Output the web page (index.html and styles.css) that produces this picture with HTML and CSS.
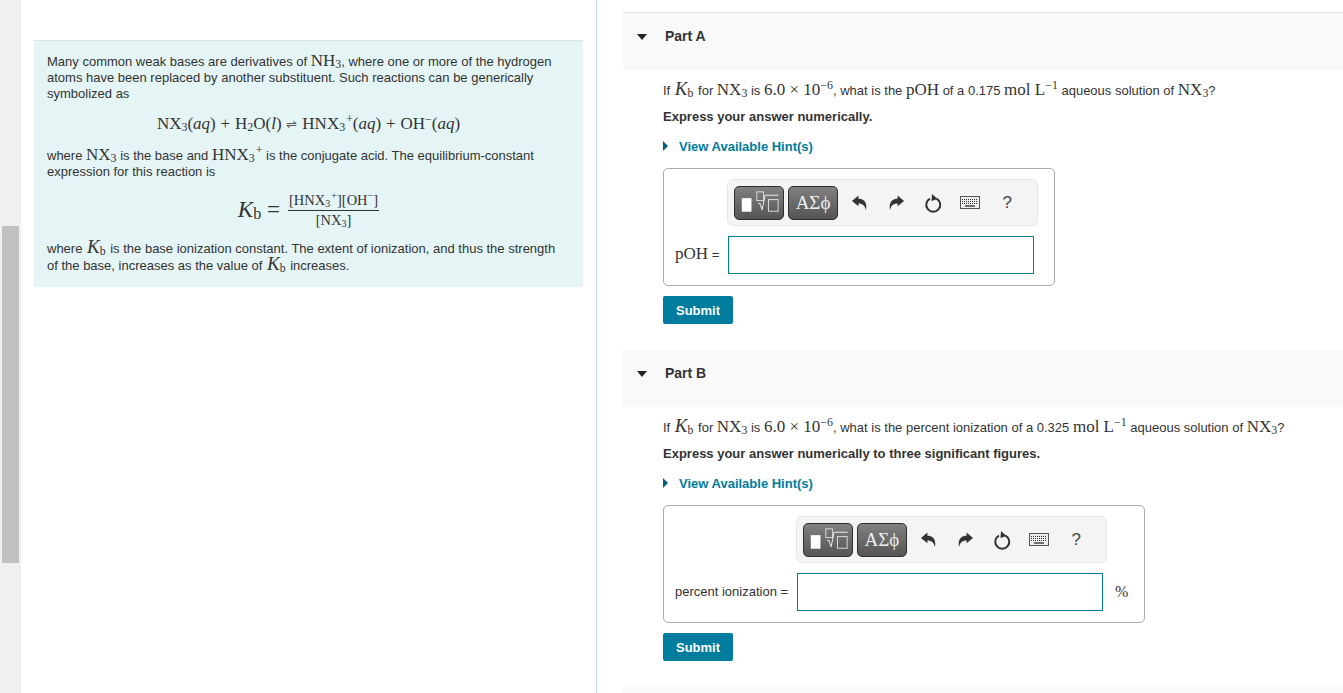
FILE: index.html
```html
<!DOCTYPE html>
<html lang="en">
<head>
    <meta charset="UTF-8">
    <title>Part A and Part B</title>
    <link rel="stylesheet" href="styles.css">
</head>
<body>

    <!-- scrollbar gutter -->
    <div class="gutter"><div class="thumb"></div></div>

    <!-- intro column -->
    <div class="left-pane">
        <div class="intro">
            <p>Many common weak bases are derivatives of <span class="m">NH<sub>3</sub></span>, where one or more of the hydrogen atoms have been replaced by another substituent. Such reactions can be generically symbolized as</p>
            <div class="equation"><span class="m">NX<sub>3</sub>(<i>aq</i>) + H<sub>2</sub>O(<i>l</i>) <span class="arrow">⇌</span> HNX<sub>3</sub><sup>+</sup>(<i>aq</i>) + OH<sup>−</sup>(<i>aq</i>)</span></div>
            <p>where <span class="m">NX<sub>3</sub></span> is the base and <span class="m">HNX<sub>3</sub><sup>+</sup></span> is the conjugate acid. The equilibrium-constant expression for this reaction is</p>
            <div class="equation kb-row">
                <span class="m kb-big"><i>K</i><sub>b</sub> =</span>
                <span class="fraction">
                    <span class="num">[HNX<sub>3</sub><sup>+</sup>][OH<sup>−</sup>]</span>
                    <span class="den">[NX<sub>3</sub>]</span>
                </span>
            </div>
            <p class="intro-last">where <span class="m kb"><i>K</i><sub>b</sub></span> is the base ionization constant. The extent of ionization, and thus the strength of the base, increases as the value of <span class="m kb"><i>K</i><sub>b</sub></span> increases.</p>
        </div>
    </div>

    <!-- questions column -->
    <div class="right-pane">

        <!-- Part A -->
        <div class="part part-first">
            <div class="part-header"><span class="caret-down"></span><span class="part-title">Part A</span></div>
            <div class="part-body">
                <p class="question">If <span class="m kb"><i>K</i><sub>b</sub></span> for <span class="m">NX<sub>3</sub></span> is <span class="m">6.0 × 10<sup>−6</sup></span>, what is the <span class="m">pOH</span> of a 0.175 <span class="m">mol L<sup>−1</sup></span> aqueous solution of <span class="m">NX<sub>3</sub></span>?</p>
                <p class="instruction">Express your answer numerically.</p>
                <div class="hint"><span class="caret-right"></span>View Available Hint(s)</div>
                <div class="answer-box answer-a">
                    <div class="toolbar">
                        <button class="tool-btn">
                            <svg width="49" height="34" viewBox="0 0 49 34"><rect x="7" y="12" width="10" height="14" fill="#fff"/><rect x="22.5" y="5.5" width="7" height="9" fill="none" stroke="#ddd"/><path d="M24 18l1.5 -1 2.5 7 3 -15h14" fill="none" stroke="#eee"/><rect x="34.5" y="13.5" width="10" height="12" fill="none" stroke="#ddd"/></svg>
                        </button>
                        <button class="tool-btn tool-text">ΑΣϕ</button>
                        <span class="tool-icon"><svg width="15" height="15" viewBox="0 0 14 14"><path d="M0 5.5L6 .5V3.5C11 3.5 14.5 7 13 14C12 10 10 8 6 8V10.5Z" fill="#333"/></svg></span>
                        <span class="tool-icon"><svg width="15" height="15" viewBox="0 0 14 14"><path d="M14 5.5L8 .5V3.5C3 3.5 -.5 7 1 14C2 10 4 8 8 8V10.5Z" fill="#333"/></svg></span>
                        <span class="tool-icon"><svg width="18" height="20" viewBox="0 0 18 20"><path d="M12.5 5.6A7 7 0 1 1 6 5.6" fill="none" stroke="#333" stroke-width="2"/><path d="M8 1L13.5 6 7.5 8Z" fill="#333"/></svg></span>
                        <span class="tool-icon"><svg width="20" height="13" viewBox="0 0 20 13"><rect x=".5" y=".5" width="19" height="12" fill="#eee" stroke="#555"/><path d="M2 3.5h16M2 5.5h16M2 7.5h16" stroke="#333" stroke-dasharray="1 1"/><path d="M5 10h10" stroke="#444" stroke-width="1.5"/></svg></span>
                        <span class="tool-icon tool-help">?</span>
                    </div>
                    <span class="answer-label"><span class="m">pOH</span> =</span>
                    <div class="answer-input"></div>
                </div>
                <button class="submit">Submit</button>
            </div>
        </div>

        <!-- Part B -->
        <div class="part">
            <div class="part-header"><span class="caret-down"></span><span class="part-title">Part B</span></div>
            <div class="part-body">
                <p class="question">If <span class="m kb"><i>K</i><sub>b</sub></span> for <span class="m">NX<sub>3</sub></span> is <span class="m">6.0 × 10<sup>−6</sup></span>, what is the percent ionization of a 0.325 <span class="m">mol L<sup>−1</sup></span> aqueous solution of <span class="m">NX<sub>3</sub></span>?</p>
                <p class="instruction">Express your answer numerically to three significant figures.</p>
                <div class="hint"><span class="caret-right"></span>View Available Hint(s)</div>
                <div class="answer-box answer-b">
                    <div class="toolbar">
                        <button class="tool-btn">
                            <svg width="49" height="34" viewBox="0 0 49 34"><rect x="7" y="12" width="10" height="14" fill="#fff"/><rect x="22.5" y="5.5" width="7" height="9" fill="none" stroke="#ddd"/><path d="M24 18l1.5 -1 2.5 7 3 -15h14" fill="none" stroke="#eee"/><rect x="34.5" y="13.5" width="10" height="12" fill="none" stroke="#ddd"/></svg>
                        </button>
                        <button class="tool-btn tool-text">ΑΣϕ</button>
                        <span class="tool-icon"><svg width="15" height="15" viewBox="0 0 14 14"><path d="M0 5.5L6 .5V3.5C11 3.5 14.5 7 13 14C12 10 10 8 6 8V10.5Z" fill="#333"/></svg></span>
                        <span class="tool-icon"><svg width="15" height="15" viewBox="0 0 14 14"><path d="M14 5.5L8 .5V3.5C3 3.5 -.5 7 1 14C2 10 4 8 8 8V10.5Z" fill="#333"/></svg></span>
                        <span class="tool-icon"><svg width="18" height="20" viewBox="0 0 18 20"><path d="M12.5 5.6A7 7 0 1 1 6 5.6" fill="none" stroke="#333" stroke-width="2"/><path d="M8 1L13.5 6 7.5 8Z" fill="#333"/></svg></span>
                        <span class="tool-icon"><svg width="20" height="13" viewBox="0 0 20 13"><rect x=".5" y=".5" width="19" height="12" fill="#eee" stroke="#555"/><path d="M2 3.5h16M2 5.5h16M2 7.5h16" stroke="#333" stroke-dasharray="1 1"/><path d="M5 10h10" stroke="#444" stroke-width="1.5"/></svg></span>
                        <span class="tool-icon tool-help">?</span>
                    </div>
                    <span class="answer-label">percent ionization =</span>
                    <div class="answer-input"></div>
                    <span class="answer-unit">%</span>
                </div>
                <button class="submit">Submit</button>
            </div>
        </div>

        <div class="part-next"></div>
    </div>

</body>
</html>
```

FILE: styles.css
```css
body {
    margin: 0;
    display: flex;
    height: 693px;
    overflow: hidden;
    font-family: "Liberation Sans", Arial, sans-serif;
    font-size: 13px;
    color: #333;
    background-color: #fff;
}
p {
    margin: 0;
}
.m {
    font-family: "Liberation Serif", "Times New Roman", serif;
    font-size: 17px;
    line-height: 0;
}
.kb {
    margin: 0 1px;
    font-size: 19px;
}
.kb sub {
    font-size: 62%;
}
sub, sup {
    font-size: 70%;
    line-height: 0;
}
sub {
    vertical-align: -2px;
}
sup {
    vertical-align: 6px;
}
sub + sup {
    margin-left: 1px;
}
.arrow {
    font-size: 13px;
    color: #555;
}

/* gutter */
.gutter {
    flex: 0 0 21px;
    box-sizing: border-box;
    padding: 226px 2px 0;
    background-color: #f0f0f0;
}
.thumb {
    width: 17px;
    height: 337px;
    background-color: #c1c1c1;
}

/* left */
.left-pane {
    flex: 0 0 576px;
    box-sizing: border-box;
    padding: 40px 13px 0;
    border-right: 1px solid #c5dbe6;
}
.intro {
    box-sizing: border-box;
    height: 247px;
    padding: 13px 20px 0 13px;
    background-color: #e5f5f6;
    border-top: 1px solid #dce3e6;
    line-height: 16px;
}
.equation {
    display: flex;
    justify-content: center;
    align-items: center;
    height: 42px;
    margin: 0 -7px 4px 0;
    word-spacing: .6px;
}
.kb-row {
    gap: 8px;
    height: 54px;
    margin-top: 3px;
    margin-bottom: 3px;
    word-spacing: 0;
}
.kb-big {
    padding-top: 4px;
    font-size: 23px;
}
.fraction {
    display: flex;
    flex-direction: column;
    align-items: center;
    font-family: "Liberation Serif", "Times New Roman", serif;
    font-size: 14.5px;
    line-height: 19px;
}
.num {
    padding: 0 1px;
    border-bottom: 1px solid #333;
}
.intro-last {
    line-height: 17px;
}

/* right */
.right-pane {
    flex: 1;
    padding: 12px 0 0 26px;
}
.part {
    margin-bottom: 26px;
}
.part-first .part-header {
    border-top: 1px solid #e5e5e5;
}
.part-header {
    display: flex;
    align-items: flex-start;
    height: 43px;
    padding: 14px 0 0 14px;
    background-color: #f9f9f9;
}
.part-title {
    margin-left: 18px;
    font-size: 14px;
    font-weight: bold;
    line-height: 18px;
}
.caret-down {
    width: 0;
    height: 0;
    margin-top: 7px;
    border-left: 5.5px solid transparent;
    border-right: 5.5px solid transparent;
    border-top: 6px solid #222;
}
.part-body {
    padding: 11px 0 0 40px;
}
.question {
    height: 20px;
    line-height: 20px;
    white-space: nowrap;
}
.instruction {
    margin-top: 6px;
    height: 20px;
    line-height: 20px;
    font-weight: bold;
}
.hint {
    display: flex;
    align-items: center;
    margin-top: 9px;
    height: 20px;
    font-weight: bold;
    color: #007c9e;
}
.caret-right {
    width: 0;
    height: 0;
    margin-right: 11px;
    border-top: 5px solid transparent;
    border-bottom: 5px solid transparent;
    border-left: 5px solid #005f7b;
}
.answer-box {
    display: grid;
    grid-template-columns: auto 306px auto;
    justify-content: start;
    align-content: start;
    column-gap: 9px;
    row-gap: 10px;
    align-items: center;
    box-sizing: border-box;
    height: 118px;
    margin-top: 12px;
    padding: 10px 11px;
    border: 1px solid #aaa;
    border-radius: 5px;
}
.answer-a {
    width: 392px;
}
.answer-b {
    width: 482px;
}
.toolbar {
    grid-column: 2;
    display: flex;
    align-items: center;
    box-sizing: border-box;
    width: 311px;
    height: 47px;
    margin-left: -1px;
    padding-left: 6px;
    background-color: #f4f4f4;
    border: 1px solid #e6e6e6;
    border-radius: 6px;
}
.tool-btn {
    display: flex;
    align-items: center;
    justify-content: center;
    box-sizing: border-box;
    width: 49.5px;
    height: 34px;
    margin-right: 4.5px;
    padding: 0;
    background: linear-gradient(#808080, #555);
    border: 1px solid #2f2f2f;
    border-radius: 5px;
}
.tool-text {
    margin-right: 3px;
    font-family: "Liberation Serif", serif;
    font-size: 19px;
    color: #eee;
}
.tool-icon {
    display: flex;
    justify-content: center;
    width: 37px;
}
.tool-help {
    font-size: 17px;
    color: #444;
}
.answer-label {
    grid-column: 1;
    margin-top: -2px;
    white-space: nowrap;
}
.answer-input {
    height: 38px;
    box-sizing: border-box;
    background-color: #fff;
    border: 1px solid #007c9e;
}
.answer-unit {
    margin: -1px 0 0 3px;
    font-family: "Liberation Serif", serif;
    font-size: 16px;
}
.submit {
    display: block;
    box-sizing: border-box;
    width: 70px;
    height: 28px;
    margin-top: 10px;
    padding: 0;
    font-family: "Liberation Sans", Arial, sans-serif;
    font-size: 13px;
    font-weight: bold;
    color: #fff;
    background-color: #007c9e;
    border: none;
    border-radius: 2px;
}
.part-next {
    height: 20px;
    background-color: #f9f9f9;
}
```
